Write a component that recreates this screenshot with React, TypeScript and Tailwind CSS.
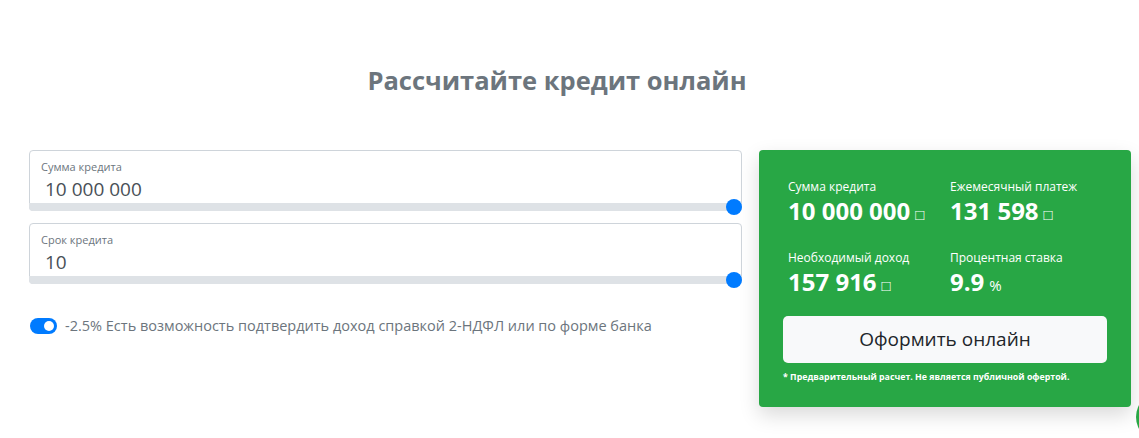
export default function App() {
  return (
    <div
      className="relative h-[438px] w-[1139px] overflow-hidden bg-white"
      style={{ fontFamily: '"Open Sans", "Noto Sans", sans-serif' }}
    >
      <h1 className="pr-[25px] pt-[60px] text-center text-[25.5px] font-bold leading-[40px] text-[#6c757d]">
        Рассчитайте кредит онлайн
      </h1>

      <div className="mt-[50px] flex items-start gap-[17px] pl-[29px]">
        {/* left: inputs */}
        <div className="w-[713px]">
          <Field label="Сумма кредита" value="10 000 000" />
          <div className="h-[12px]" />
          <Field label="Срок кредита" value="10" />

          <div className="mt-[31px] flex items-center gap-[8px] pl-[1px]">
            <div className="relative h-[16px] w-[27px] rounded-full bg-[#007bff]">
              <div className="absolute right-[3px] top-[3px] h-[10px] w-[10px] rounded-full bg-white" />
            </div>
            <span className="text-[14.5px] text-[#6c757d]">
              -2.5% Есть возможность подтвердить доход справкой 2-НДФЛ или по форме банка
            </span>
          </div>
        </div>

        {/* right: result card */}
        <div className="w-[372px] rounded-[4px] bg-[#28a745] px-[24px] pb-[23px] pt-[28px] text-white shadow-[0_8px_20px_rgba(0,0,0,0.15)]">
          <div className="grid grid-cols-[162px_1fr] gap-y-[20px] pl-[5px]">
            <Stat label="Сумма кредита" value="10 000 000" unit="□" />
            <Stat label="Ежемесячный платеж" value="131 598" unit="□" />
            <Stat label="Необходимый доход" value="157 916" unit="□" />
            <Stat label="Процентная ставка" value="9.9" unit="%" />
          </div>
          <button className="mt-[16px] h-[47px] w-full rounded-[5px] bg-[#f8f9fa] text-[19px] text-[#212529]">
            Оформить онлайн
          </button>
          <p className="mt-[7px] text-[8.8px] font-bold leading-[14px]">
            * Предварительный расчет. Не является публичной офертой.
          </p>
        </div>
      </div>

      <div className="absolute left-[1136px] top-[392px] h-[50px] w-[50px] rounded-full bg-[#28a745]" />
    </div>
  );
}

function Field({ label, value }: { label: string; value: string }) {
  return (
    <div className="relative h-[61px] rounded-[4px] border border-[#ced4da]">
      <div className="pl-[11px] pt-[9px] text-[11px] leading-[14px] text-[#6c757d]">{label}</div>
      <div className="pl-[15px] pt-[2px] text-[19px] leading-[26px] text-[#495057]">{value}</div>
      <div className="absolute bottom-[-1px] left-[-1px] right-[-1px] h-[8px] rounded-b-[4px] bg-[#dee2e6]" />
      <div className="absolute bottom-[-5px] right-[-1px] h-[16px] w-[16px] rounded-full bg-[#007bff]" />
    </div>
  );
}

function Stat({ label, value, unit }: { label: string; value: string; unit: string }) {
  return (
    <div>
      <div className="text-[12px] leading-[18px]">{label}</div>
      <div className="flex items-baseline gap-[5px] leading-[30px]">
        <span className="text-[24px] font-bold">{value}</span>
        <span className="text-[15px]">{unit}</span>
      </div>
    </div>
  );
}
